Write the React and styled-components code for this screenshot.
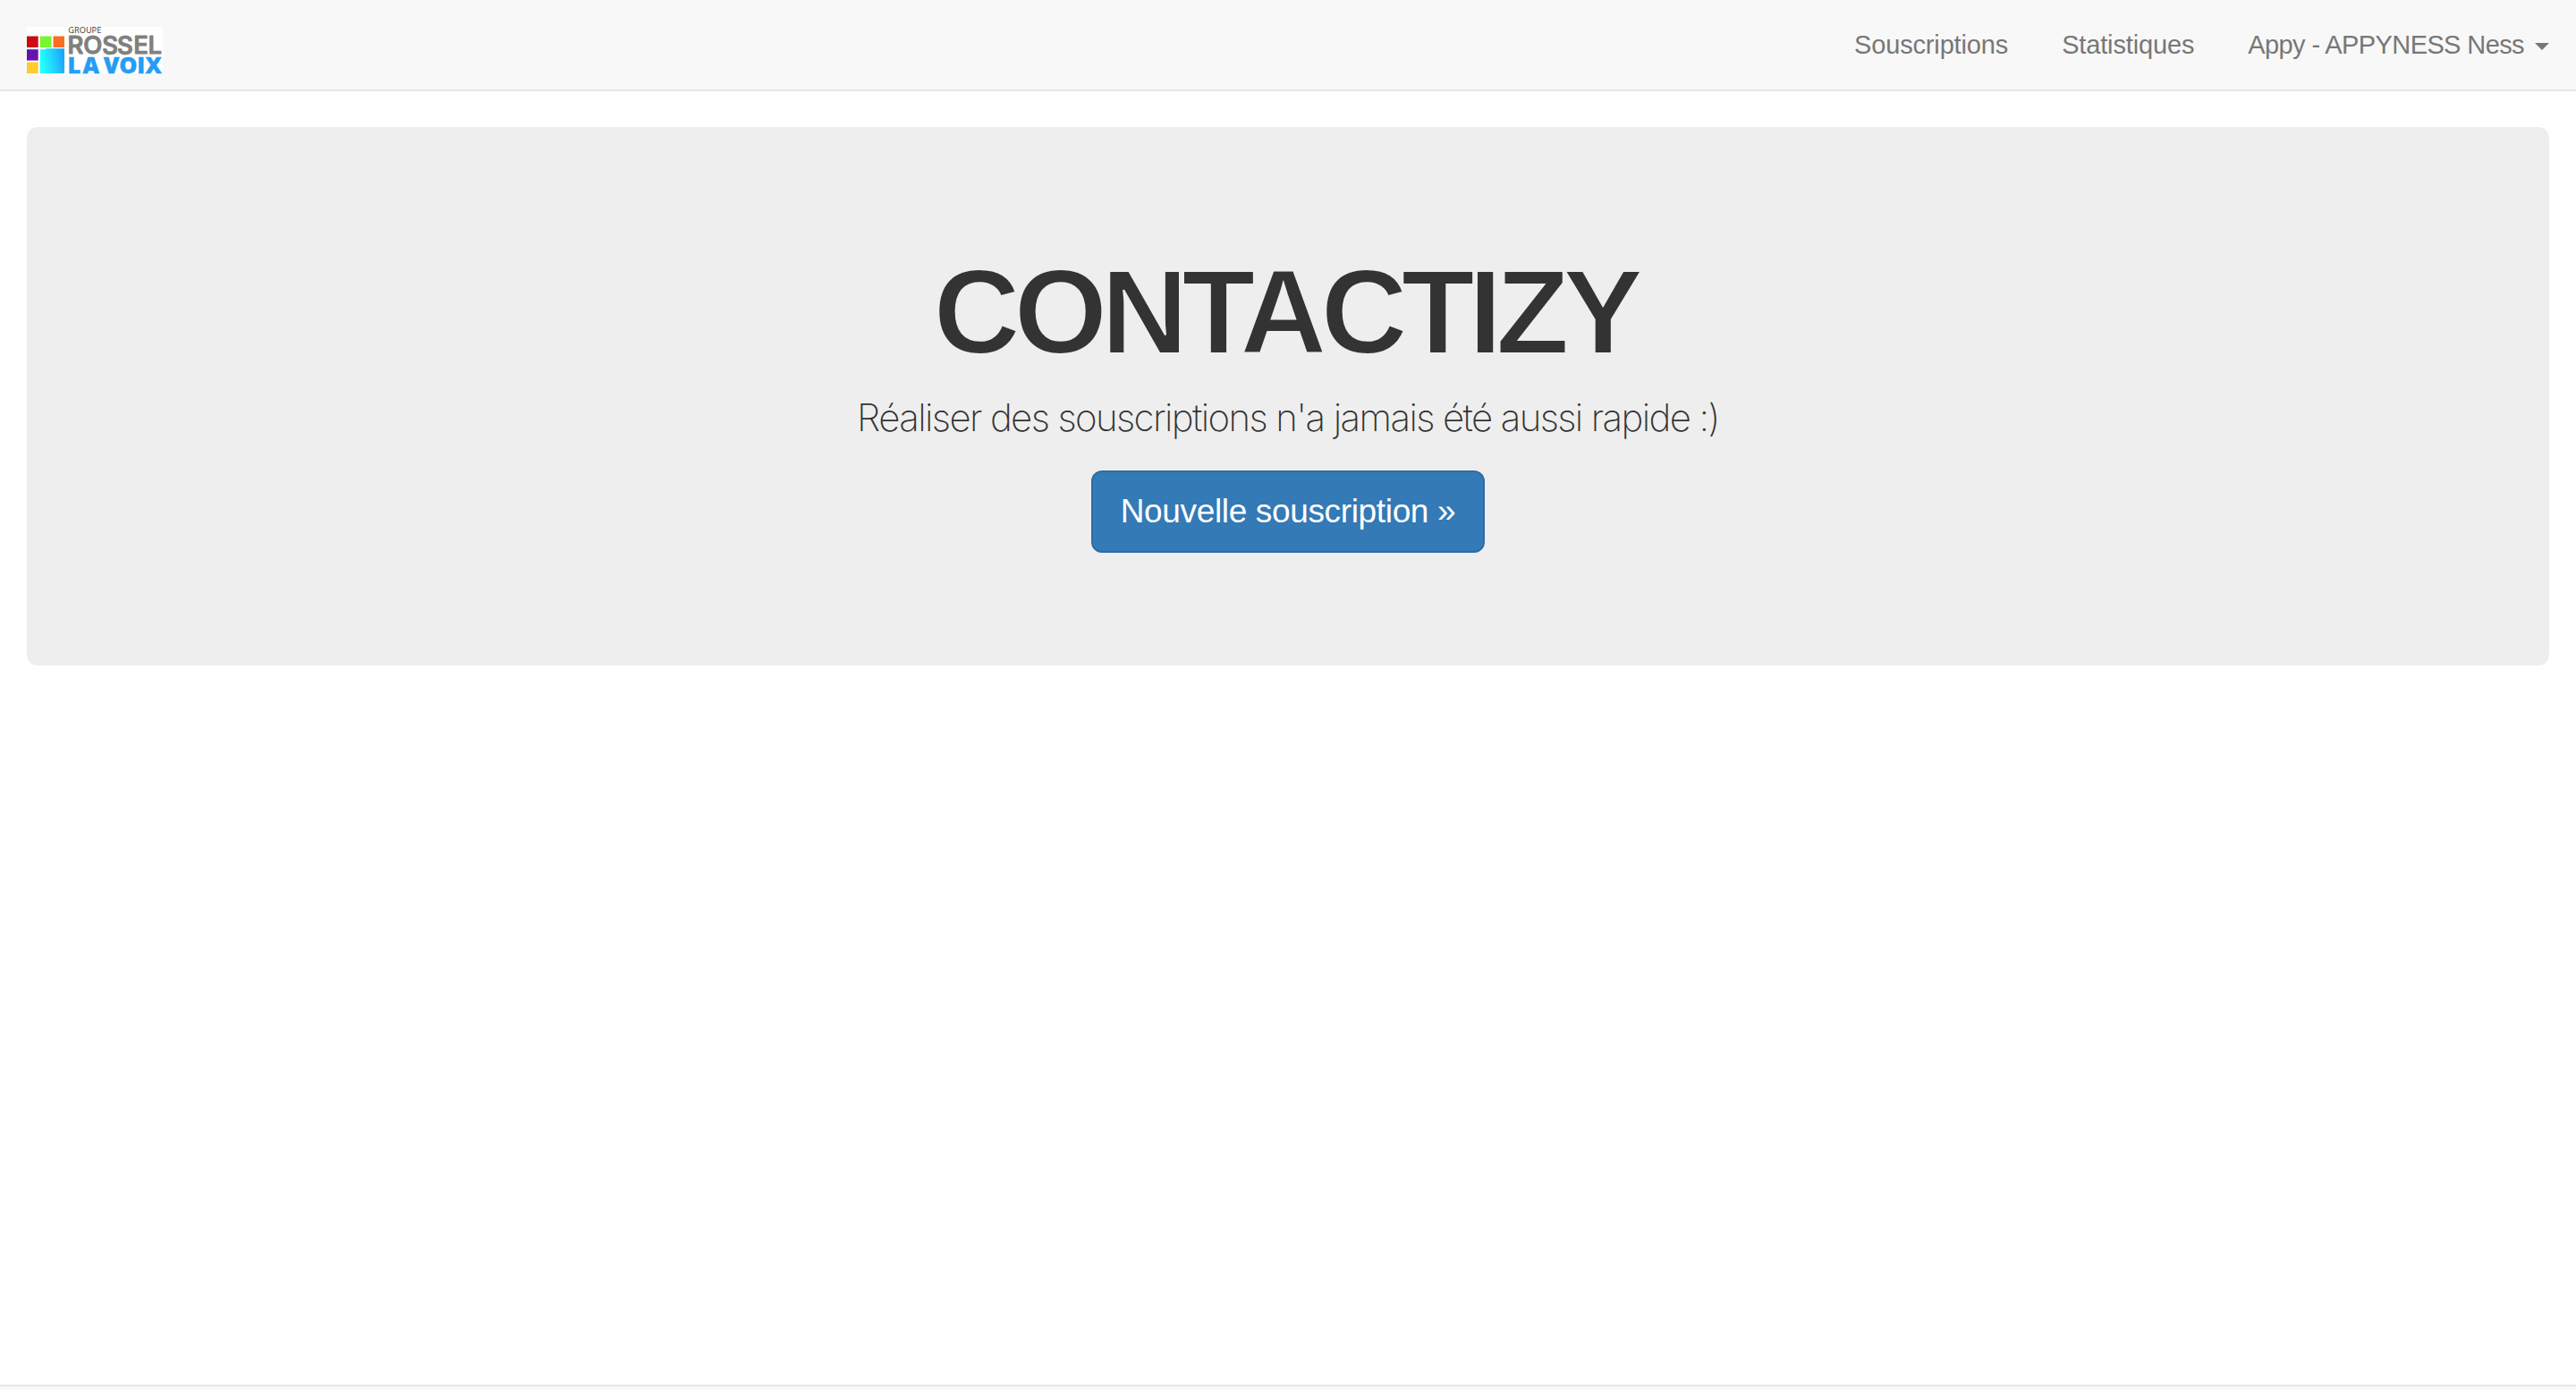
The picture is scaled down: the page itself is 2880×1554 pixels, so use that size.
import React from 'react'
import styled, { createGlobalStyle } from 'styled-components'

const GlobalStyle = createGlobalStyle`
  * {
    box-sizing: border-box;
  }

  body {
    margin: 0;
    background: #fff;
    color: #333;
    font-family: 'Liberation Sans', Arial, sans-serif;
    font-size: 29px;
    line-height: 40px;
  }
`

const Page = styled.div`
  height: 1554px;
  display: flex;
  flex-direction: column;
  overflow: hidden;
`

const Navbar = styled.header`
  flex: none;
  height: 102px;
  padding: 0 30px;
  display: flex;
  justify-content: space-between;
  background: #f8f8f8;
  border-bottom: 2px solid #e7e7e7;
`

const Brand = styled.a`
  display: block;
  padding: 30px 0 18px;

  svg {
    display: block;
    overflow: visible;
  }
`

const Nav = styled.nav`
  display: flex;
  gap: 60px;
`

const NavLink = styled.a`
  display: flex;
  align-items: center;
  height: 100px;
  color: #777;
  letter-spacing: ${({ $spacing }) => $spacing || '-0.15px'};
  text-decoration: none;
  white-space: nowrap;
`

const Caret = styled.span`
  width: 0;
  height: 0;
  margin: 4px 0 0 12px;
  border-top: 8px solid #777;
  border-left: 8px solid transparent;
  border-right: 8px solid transparent;
`

const Main = styled.main`
  flex: 1;
  padding: 40px 30px 0;
`

const Jumbotron = styled.section`
  height: 602px;
  padding: 138px 120px 0;
  display: flex;
  flex-direction: column;
  align-items: center;
  background: #eee;
  border-radius: 12px;
`

// the outline takes the background colour, to thin the strokes of the letters
const Title = styled.h1`
  margin: 0 0 19px;
  padding-right: 6px;
  font-size: 134px;
  font-weight: bold;
  line-height: 138px;
  letter-spacing: -6.7px;
  -webkit-text-stroke: 2px #eee;
`

const Lead = styled.p`
  margin: 0 0 29px;
  font-family: Inter, 'Liberation Sans', sans-serif;
  font-size: 42px;
  font-weight: 200;
  line-height: 60px;
  letter-spacing: -1.62px;
  white-space: nowrap;
`

const Button = styled.a`
  width: 440px;
  height: 92px;
  padding: 20px 0;
  border: 2px solid #2e6da4;
  border-radius: 12px;
  background: #337ab7;
  color: #fff;
  font-size: 37px;
  line-height: 48px;
  letter-spacing: -0.35px;
  text-align: center;
  text-decoration: none;
  white-space: nowrap;
`

const Footer = styled.footer`
  flex: none;
  height: 6px;
  background: #f8f8f8;
  border-top: 2px solid #e7e7e7;
`

const Logo = () => (
  <svg width="152" height="52" viewBox="0 0 152 52">
    <defs>
      <linearGradient id="sky" x1="0" y1="0.2" x2="1" y2="0">
        <stop offset="0" stopColor="#2ff" />
        <stop offset="1" stopColor="#1e9cfc" />
      </linearGradient>
    </defs>
    <rect width="152" height="52" fill="#fff" />
    <rect y="10.5" width="12.7" height="12.5" fill="#cb0a14" />
    <rect x="14.7" y="10.5" width="12.8" height="12.5" fill="#76f531" />
    <rect x="29.5" y="10.5" width="12.5" height="12.5" fill="#fb6d22" />
    <rect y="25.2" width="12.7" height="12.4" fill="#6713ad" />
    <rect y="39.4" width="12.7" height="12.6" fill="#fecb31" />
    <path d="M14.7 25.3H21V24.3H42V52H14.7Z" fill="url(#sky)" />
    <text x="46.3" y="6.7" fontFamily="Noto Sans" fontSize="9.2" fill="#444" textLength="37" lengthAdjust="spacingAndGlyphs">
      GROUPE
    </text>
    <text
      x="45.6 63.2 84.3 100.9 119.2 135.6"
      y="29.6"
      fontFamily="Inter"
      fontWeight="500"
      fontSize="27.4"
      fill="#808080"
      stroke="#808080"
      strokeWidth="1.2"
      strokeLinejoin="round"
    >
      ROSSEL
    </text>
    <g fontFamily="Open Sans" fontWeight="800" fontSize="25.4" fill="#259df4" stroke="#259df4" strokeWidth="0.4">
      <text x="45.4 62.4" y="51.5">LA</text>
      <text x="85.8 103.2 123.2 132.4" y="51.5">VOIX</text>
    </g>
  </svg>
)

const Header = () => (
  <Navbar>
    <Brand>
      <Logo />
    </Brand>
    <Nav>
      <NavLink>Souscriptions</NavLink>
      <NavLink>Statistiques</NavLink>
      <NavLink $spacing="-0.6px">
        Appy - APPYNESS Ness
        <Caret />
      </NavLink>
    </Nav>
  </Navbar>
)

const App = () => (
  <Page>
    <GlobalStyle />
    <Header />
    <Main>
      <Jumbotron>
        <Title>CONTACTIZY</Title>
        <Lead>Réaliser des souscriptions n'a jamais été aussi rapide :)</Lead>
        <Button>Nouvelle souscription »</Button>
      </Jumbotron>
    </Main>
    <Footer />
  </Page>
)

export default App
